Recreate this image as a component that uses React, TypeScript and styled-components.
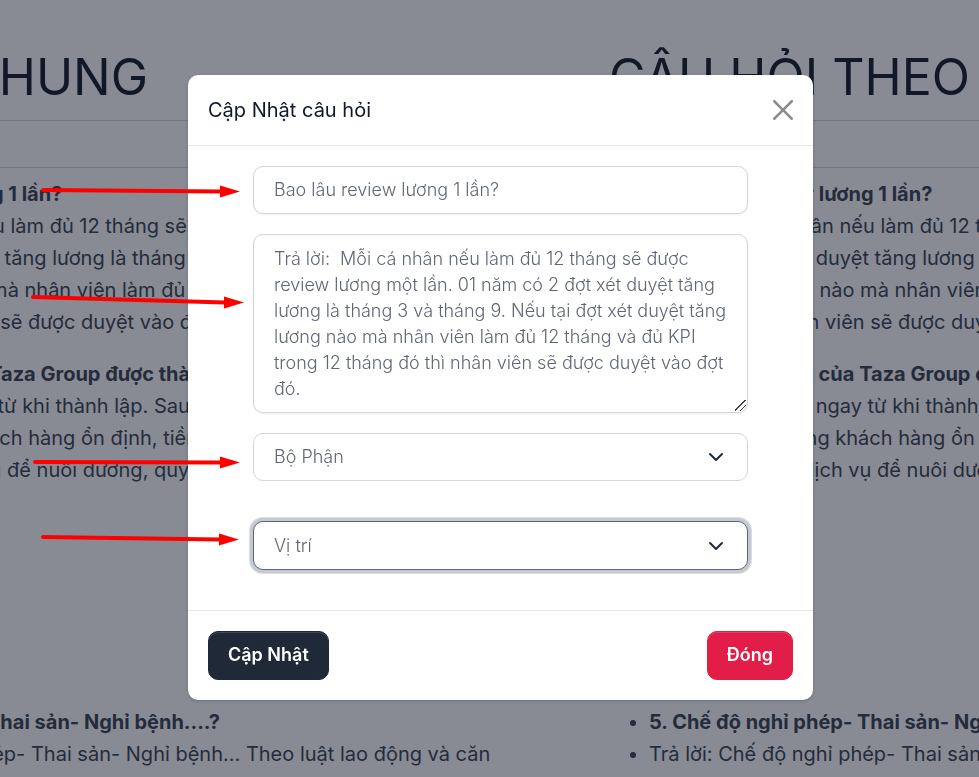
import React from "react";
import styled, { createGlobalStyle } from "styled-components";

const Global = createGlobalStyle`
  * { box-sizing: border-box; }
  body {
    margin: 0;
    background: #fff;
    color: #374151;
    font-family: Inter, "Noto Sans", sans-serif;
    font-size: 20px;
    line-height: 32px;
    overflow: hidden;
  }
`;

const Page = styled.div`
  position: relative;
  min-height: 100vh;
  overflow: hidden;
`;

const Board = styled.main`
  display: grid;
  grid-template-columns: 870px 870px;
  height: 100vh;
  margin-left: -261px;
  overflow: hidden;
`;

const Column = styled.section`
  padding-top: 46px;
  white-space: nowrap;
`;

const ColumnTitle = styled.h1`
  margin: 0;
  height: 75px;
  border-bottom: 1px solid #d1d5db;
  color: #111827;
  font-size: 50px;
  font-weight: 400;
  line-height: 62px;
`;

const ColumnBar = styled.div`
  height: 47px;
  border-bottom: 1px solid #d1d5db;
`;

const Answers = styled.ul<{ $gap?: number }>`
  margin: ${(p) => p.$gap ?? 0}px 0 0;
  padding: 0 0 0 40px;
  font-weight: 400;

  strong { font-weight: 700; }
`;

const Backdrop = styled.div`
  position: fixed;
  inset: 0;
  display: flex;
  align-items: flex-start;
  justify-content: center;
  padding: 75px 20px 20px 42px;
  background: rgba(17, 24, 39, 0.5);
`;

const Dialog = styled.form`
  width: 100%;
  max-width: 625px;
  border-radius: 10px;
  background: #fff;
  box-shadow: 0 1px 3px rgba(17, 24, 39, 0.25);
`;

const DialogHeader = styled.header`
  display: flex;
  align-items: center;
  justify-content: space-between;
  height: 71px;
  padding: 0 20px;
  border-bottom: 1px solid #e5e7eb;
`;

const DialogTitle = styled.h2`
  margin: 0;
  color: #111827;
  font-size: 20px;
  font-weight: 400;
`;

const CloseButton = styled.button`
  display: flex;
  padding: 0;
  border: 0;
  background: none;
  color: #888b90;
  cursor: pointer;
`;

const Fields = styled.div`
  display: flex;
  flex-direction: column;
  gap: 20px;
  padding: 20px 65px 40px;
`;

const fieldStyle = `
  display: block;
  width: 100%;
  padding: 10px 20px;
  border: 1px solid #d1d5db;
  border-radius: 10px;
  outline: 0;
  background: #fff;
  color: #5f6675;
  font-family: inherit;
  font-size: 18px;
  font-weight: 300;
  line-height: 26px;
`;

const TextInput = styled.input`
  ${fieldStyle}
  height: 48px;
  padding-bottom: 12px;
  box-shadow: 0 1px 2px rgba(17, 24, 39, 0.07);
`;

const TextArea = styled.textarea`
  ${fieldStyle}
  height: 179px;
  padding-top: 11px;
  overflow: hidden;
  resize: vertical;
  box-shadow: 0 1px 2px rgba(17, 24, 39, 0.07);

  &::-webkit-resizer {
    background: linear-gradient(
      135deg,
      transparent 44%, #444 45% 50%, transparent 51% 69%, #444 70% 75%, transparent 76%
    ) 3px 3px / 11px 11px no-repeat;
  }
`;

const SelectWrap = styled.div<{ $spaced?: boolean }>`
  position: relative;
  margin-top: ${(p) => (p.$spaced ? 20 : 0)}px;

  svg {
    position: absolute;
    top: 50%;
    right: 22px;
    margin-top: -10px;
    pointer-events: none;
  }
`;

const Select = styled.select<{ $active?: boolean }>`
  ${fieldStyle}
  appearance: none;
  height: ${(p) => (p.$active ? 49 : 48)}px;
  border-color: ${(p) => (p.$active ? "#506690" : "#d1d5db")};
  box-shadow: ${(p) => (p.$active ? "0 0 0 3px #c7c9cc, 0 0 0 4px #dcdee0" : "none")};
`;

const DialogFooter = styled.footer`
  display: flex;
  justify-content: space-between;
  padding: 20px;
  border-top: 1px solid #e5e7eb;
`;

const Action = styled.button<{ $danger?: boolean }>`
  height: 49px;
  padding: 0 19px 2px;
  border: 1px solid ${(p) => (p.$danger ? "#e11d48" : "#1f2937")};
  border-radius: 10px;
  background: ${(p) => (p.$danger ? "#e11d48" : "#1f2937")};
  box-shadow: inset 0 1px 0 rgba(255, 255, 255, 0.15);
  color: #fff;
  font-family: inherit;
  font-size: 18px;
  font-weight: 600;
  cursor: pointer;
`;

const Arrows = styled.svg`
  position: fixed;
  top: 0;
  left: 0;
  pointer-events: none;
`;

const Chevron = () => (
  <svg width="20" height="20" viewBox="0 0 20 20" fill="none" stroke="#1f2937" strokeWidth="2" strokeLinecap="round" strokeLinejoin="round">
    <path d="M4 7l6 6 6-6" />
  </svg>
);

const titles = ["CÂU HỎI CHUNG", "CÂU HỎI THEO BỘ PHẬN"];

const answer =
  "Trả lời:  Mỗi cá nhân nếu làm đủ 12 tháng sẽ được review lương một lần. 01 năm có 2 đợt xét duyệt tăng lương là tháng 3 và tháng 9. Nếu tại đợt xét duyệt tăng lương nào mà nhân viên làm đủ 12 tháng và đủ KPI trong 12 tháng đó thì nhân viên sẽ được duyệt vào đợt đó.";

const arrows = [
  [43, 190, 240, 191.5],
  [33, 297, 244, 302.5],
  [35, 462, 240, 462.5],
  [43, 537, 239, 539.5],
];

export default function App() {
  return (
    <Page>
      <Global />
      <Board>
        {titles.map((title) => (
          <Column key={title}>
            <ColumnTitle>{title}</ColumnTitle>
            <ColumnBar />
            <Answers $gap={10}>
              <li><strong>4. Bao lâu review lương 1 lần?</strong></li>
              <li>
                Trả lời: Mỗi cá nhân nếu làm đủ 12 tháng sẽ được review lương một lần.<br />
                01 năm, 2 đợt xét duyệt tăng lương là tháng 3 và tháng 9. Nếu<br />
                tại đợt tăng lương nào mà nhân viên làm đủ 12 tháng<br />
                và đủ KPI thì nhân viên sẽ được duyệt vào đợt đó.
              </li>
            </Answers>
            <Answers $gap={20}>
              <li><strong>2.2. Thương hiệu của Taza Group được thành lập?</strong></li>
              <li>
                Trả lời: Tầm nhìn, ngay từ khi thành lập. Sau đó<br />
                luôn có được lượng khách hàng ổn định, tiềm năng<br />
                và có nhiều loại dịch vụ để nuôi dưỡng, quy
              </li>
            </Answers>
            <Answers $gap={220}>
              <li><strong>5. Chế độ nghỉ phép- Thai sản- Nghỉ bệnh....?</strong></li>
              <li>Trả lời: Chế độ nghỉ phép- Thai sản- Nghỉ bệnh... Theo luật lao động và căn</li>
            </Answers>
          </Column>
        ))}
      </Board>

      <Backdrop>
        <Dialog role="dialog" aria-labelledby="dialog-title" onSubmit={(e) => e.preventDefault()}>
          <DialogHeader>
            <DialogTitle id="dialog-title">Cập Nhật câu hỏi</DialogTitle>
            <CloseButton type="button" aria-label="Đóng">
              <svg width="20" height="20" viewBox="0 0 16 16" fill="currentColor">
                <path d="M.293.293a1 1 0 0 1 1.414 0L8 6.586 14.293.293a1 1 0 1 1 1.414 1.414L9.414 8l6.293 6.293a1 1 0 0 1-1.414 1.414L8 9.414l-6.293 6.293a1 1 0 0 1-1.414-1.414L6.586 8 .293 1.707a1 1 0 0 1 0-1.414z" />
              </svg>
            </CloseButton>
          </DialogHeader>
          <Fields>
            <TextInput aria-label="Câu hỏi" defaultValue="Bao lâu review lương 1 lần?" />
            <TextArea aria-label="Trả lời" defaultValue={answer} spellCheck={false} />
            <SelectWrap>
              <Select aria-label="Bộ Phận"><option>Bộ Phận</option></Select>
              <Chevron />
            </SelectWrap>
            <SelectWrap $spaced>
              <Select $active aria-label="Vị trí"><option>Vị trí</option></Select>
              <Chevron />
            </SelectWrap>
          </Fields>
          <DialogFooter>
            <Action type="submit">Cập Nhật</Action>
            <Action type="button" $danger>Đóng</Action>
          </DialogFooter>
        </Dialog>
      </Backdrop>

      <Arrows width="260" height="560" aria-hidden="true">
        {arrows.map(([x1, y1, x2, y2]) => (
          <g key={y1} fill="#f00" stroke="#f00">
            <line x1={x1} y1={y1} x2={x2 - 19} y2={y2} strokeWidth="4" strokeLinecap="round" />
            <path d={`M${x2} ${y2}l-20-6v12z`} stroke="none" />
          </g>
        ))}
      </Arrows>
    </Page>
  );
}
